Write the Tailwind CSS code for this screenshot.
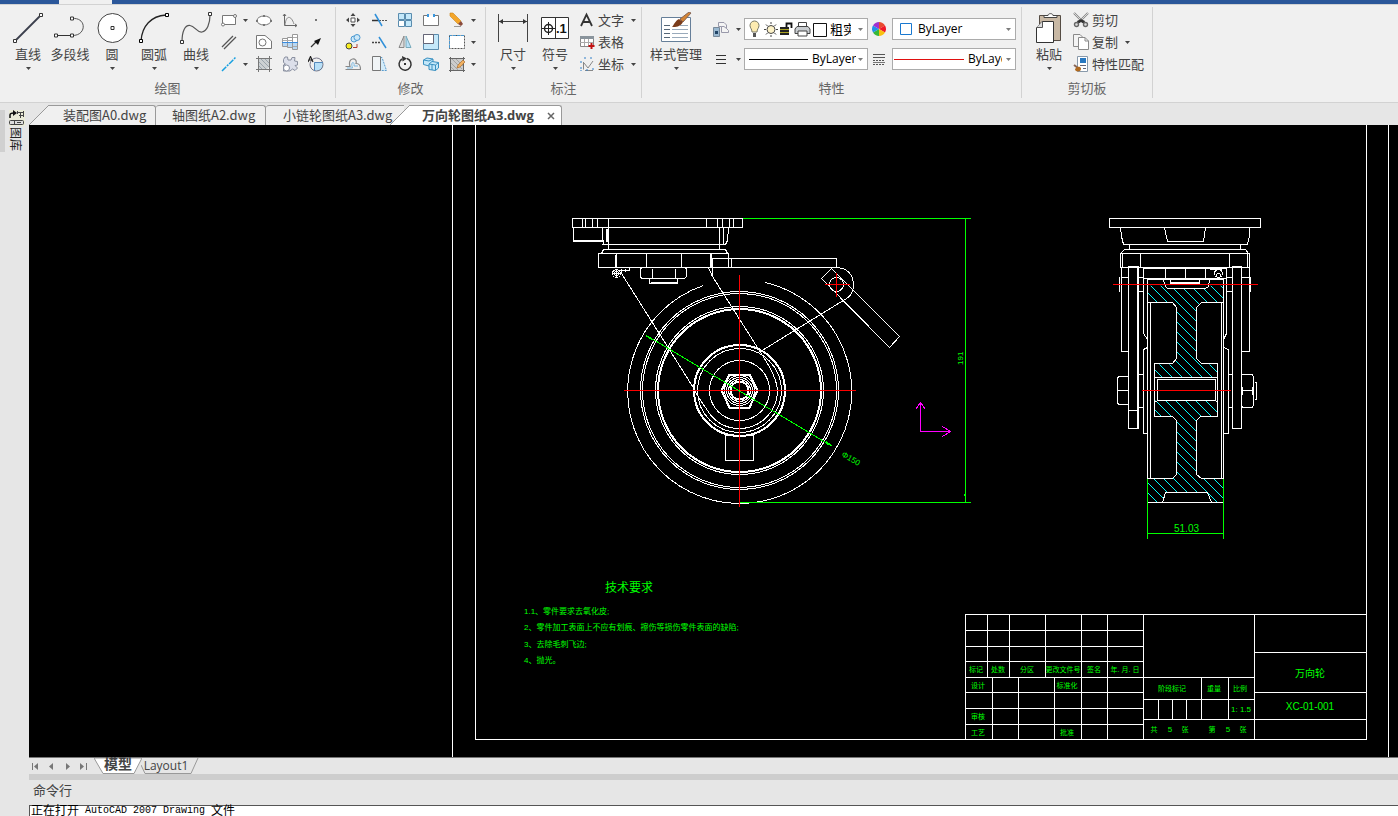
<!DOCTYPE html>
<html lang="zh-CN">
<head>
    <meta charset="UTF-8">
    <meta name="viewport" content="width=device-width, initial-scale=1.0">
    <title>万向轮图纸A3.dwg</title>
    <script src="https://cdn.jsdelivr.net/npm/@tailwindcss/browser@4"></script>
</head>
<body class="bg-[#e6e6e6] text-[#444] text-[13px] leading-[18px] font-['Open_Sans','Noto_Sans_CJK_SC',sans-serif]">
    <!-- Shared shapes -->
    <svg class="hidden">
        <symbol id="caret" viewBox="0 0 5 3"><path d="M0 0H5L2.5 3Z" fill="#444"/></symbol>
        <symbol id="page" viewBox="0 0 16 16"><path d="M.5.5H7L10 3.5V12.5H.5Z" fill="#f4f4f4" stroke="#8a8a8a"/><path d="M5.500 3.500H12L15.500 7V15.500H5.500Z" fill="#fff" stroke="#8a8a8a"/><path d="M12 3.500V7H15.500" fill="none" stroke="#8a8a8a"/></symbol>
    </svg>

    <div class="h-screen flex flex-col overflow-hidden">
        <!-- Title strip -->
        <div class="h-1 shrink-0 flex bg-[#2b579a]">
            <div class="ml-[59px] w-[53px] bg-[#f0f0f0]"></div>
        </div>

        <!-- Ribbon -->
        <header class="h-[99px] shrink-0 flex bg-[#f0f0f0] border-y border-[#d2d2d2] whitespace-nowrap">
            <!-- Draw -->
            <section class="w-[336px] mt-[2px] mb-1 border-r border-[#d2d2d2] pt-[2px] flex flex-col">
                <div class="h-[66px] flex pl-[7px]">
                    <button class="w-[42px] pt-[3px] flex flex-col items-center">
                        <svg class="size-8" viewBox="0 0 32 32"><path d="M3 29L29 3" stroke="#3b3f4c" stroke-width="1.800"/><path d="M1.500 27.500h3v3h-3zM27.500 1.500h3v3h-3z" fill="#fff" stroke="#333"/></svg>
                        <span class="mt-px">直线</span>
                        <svg class="mt-1 w-[5px] h-[3px]"><use href="#caret"/></svg>
                    </button>
                    <button class="w-[42px] pt-[3px] flex flex-col items-center">
                        <svg class="size-8" viewBox="0 0 32 32"><path d="M2 23.500H18" stroke="#333"/><path d="M18 6.500C33 5 33 24 18 23.500" fill="none" stroke="#555"/><path d="M.5 22h3v3h-3zM16.500 22h3v3h-3zM16.500 5h3v3h-3z" fill="#fff" stroke="#333"/></svg>
                        <span class="mt-px">多段线</span>
                    </button>
                    <button class="w-[42px] pt-[3px] flex flex-col items-center">
                        <svg class="size-8" viewBox="0 0 32 32"><circle cx="16.500" cy="16" r="14.500" fill="#fff" stroke="#444"/><path d="M15 14.500h3v3h-3z" fill="#fff" stroke="#333"/></svg>
                        <span class="mt-px">圆</span>
                        <svg class="mt-1 w-[5px] h-[3px]"><use href="#caret"/></svg>
                    </button>
                    <button class="w-[42px] pt-[3px] flex flex-col items-center">
                        <svg class="size-8" viewBox="0 0 32 32"><path d="M3 29C4 14 13 4 28 3" fill="none" stroke="#222" stroke-width="1.300"/><path d="M1.500 27.500h3v3h-3zM27.500 1.500h3v3h-3z" fill="#fff" stroke="#000"/></svg>
                        <span class="mt-px">圆弧</span>
                        <svg class="mt-1 w-[5px] h-[3px]"><use href="#caret"/></svg>
                    </button>
                    <button class="w-[42px] pt-[3px] flex flex-col items-center">
                        <svg class="size-8" viewBox="0 0 32 32"><path d="M2 30C2 19 5 13 10 13.500C15 14 17 21 22 20C27 19 30 12 30 3" fill="none" stroke="#555" stroke-width="1.200"/><path d="M.5 28.500h3v3h-3zM28.500.5h3v3h-3z" fill="#fff" stroke="#333"/></svg>
                        <span class="mt-px">曲线</span>
                        <svg class="mt-1 w-[5px] h-[3px]"><use href="#caret"/></svg>
                    </button>
                    <div class="grid grid-cols-[34px_26px_26px_26px] grid-rows-3">
                        <button aria-label="矩形" class="flex items-center gap-[6px] pl-1"><svg class="size-4" viewBox="0 0 16 16"><path d="M1.500 3.500h13v9h-13z" fill="#fff" stroke="#777"/><circle cx="14" cy="4" r="1.500" fill="#fff" stroke="#777"/><circle cx="2" cy="12.500" r="1.500" fill="#fff" stroke="#777"/></svg><svg class="w-[5px] h-[3px]"><use href="#caret"/></svg></button>
                        <button aria-label="椭圆" class="flex items-center justify-center"><svg class="size-4" viewBox="0 0 16 16"><ellipse cx="8" cy="8.500" rx="7" ry="4.500" fill="#fff" stroke="#777"/><path d="M0 8h2v2H0zM14 8h2v2h-2zM7 3h2v2H7zM7 12h2v2H7z" fill="#777"/></svg></button>
                        <button aria-label="样条曲线" class="flex items-center justify-center"><svg class="size-4" viewBox="0 0 16 16"><path d="M2.500 2V13.500H15M1 4L2.500 2L4 4M13 12L15 13.500L13 15" fill="none" stroke="#666"/><path d="M3 13C4 3 9 3 12 12" fill="none" stroke="#888"/></svg></button>
                        <button aria-label="点" class="flex items-center justify-center"><svg class="size-4" viewBox="0 0 16 16"><path d="M7 7h2v2H7z" fill="#777"/></svg></button>
                        <button aria-label="平行线" class="flex items-center pl-1"><svg class="size-4" viewBox="0 0 16 16"><path d="M1 13L12 2M3 15L15 3" stroke="#555" stroke-width="1.300"/></svg></button>
                        <button aria-label="面域" class="flex items-center justify-center"><svg class="size-4" viewBox="0 0 16 16"><path d="M.5 1.500H9L15.500 7V14.500H.5Z" fill="#fff" stroke="#777"/><circle cx="6.500" cy="8.500" r="3.500" fill="#fff" stroke="#777"/></svg></button>
                        <button aria-label="轴" class="flex items-center justify-center"><svg class="size-4" viewBox="0 0 16 16"><path d="M.5 4.500h5v8h-5zM5.500 3.500h5v10h-5zM10.500.5h5v15h-5z" fill="#fff" stroke="#999"/><path d="M1 8h4v4H1zM6 8h4v5H6zM11 8h4v7h-4z" fill="#b8d8f4"/><path d="M0 8.500H16" stroke="#3c8cdc"/><path d="M1 6.500H10M11 3.500h4M11 12.500h4" stroke="#aaa"/></svg></button>
                        <button aria-label="引线" class="flex items-center justify-center"><svg class="size-4" viewBox="0 0 16 16"><path d="M3 13L9 7" stroke="#333" stroke-width="1.200"/><path d="M13 4L6 7L10 11Z" fill="#111"/></svg></button>
                        <button aria-label="构造线" class="flex items-center gap-[6px] pl-1"><svg class="size-4" viewBox="0 0 16 16"><path d="M1 15L15 1" stroke="#18a0e0" stroke-width="1.500" stroke-dasharray="6 1 2 1"/></svg><svg class="w-[5px] h-[3px]"><use href="#caret"/></svg></button>
                        <button aria-label="图案填充" class="flex items-center justify-center"><svg class="size-4" viewBox="0 0 16 16"><path d="M2 2H14V10L10 14H2Z" fill="#ccd0d2"/><path d="M2 5L11 14M2 9L7 14M4 2L14 12M8 2L14 8" stroke="#9aa4ac"/><path d="M2.500 0V16M13.500 0V16M0 2.500H16M0 13.500H16" stroke="#777"/></svg></button>
                        <button aria-label="齿轮" class="flex items-center justify-center"><svg class="size-4" viewBox="0 0 16 16"><path d="M1.500 3.500L3 1H5.500L6 4H9L10 1.500H13L12.500 5L15.500 5.500V9L13 9.500L15.500 12L13 14.500L10.500 13L8 15H1.500V9L3.500 8L1.500 6.500Z" fill="#dcdfea" stroke="#8a90a0"/><circle cx="4.500" cy="12" r="3" fill="#fff" stroke="#8a90a0"/></svg></button>
                        <button aria-label="局部放大" class="flex items-center justify-center"><svg class="size-4" viewBox="0 0 16 16"><path d="M6 6h9v4a5 5 0 0 1-9 3z" fill="#b8e0f8"/><circle cx="8.500" cy="8.500" r="6.500" fill="none" stroke="#778"/><path d="M6.500 15V6.500H15" fill="none" stroke="#58b"/><path d="M0 6L2.500.5 5 6M1 4h3" fill="none" stroke="#222" stroke-width="1.200"/></svg></button>
                    </div>
                </div>
                <h2 class="mt-1 text-center text-[#666]">绘图</h2>
            </section>

            <!-- Modify -->
            <section class="w-[150px] mt-[2px] mb-1 border-r border-[#d2d2d2] pt-[2px] flex flex-col">
                <div class="h-[66px] grid grid-cols-[26px_26px_26px_26px_40px] grid-rows-3 pl-1">
                    <button aria-label="移动" class="flex items-center justify-center"><svg class="size-4" viewBox="0 0 16 16"><path d="M6 6h4v4H6z" fill="#fff" stroke="#555"/><path d="M8 1L10.500 4H5.500ZM8 15L10.500 12H5.500ZM1 8L4 5.500V10.500ZM15 8L12 5.500V10.500Z" fill="#444"/></svg></button>
                    <button aria-label="修剪" class="flex items-center justify-center"><svg class="size-4" viewBox="0 0 16 16"><path d="M1 8.500H8" stroke="#333" stroke-width="1.500"/><path d="M8 8.500H16" stroke="#555" stroke-dasharray="2 1"/><path d="M4 2L11 14" stroke="#2f8fd8" stroke-width="1.500"/></svg></button>
                    <button aria-label="阵列" class="flex items-center justify-center"><svg class="size-4" viewBox="0 0 16 16"><path d="M1.500 1.500h6v6h-6zM8.500 1.500h6v6h-6zM8.500 8.500h6v6h-6z" fill="#c4e8fa" stroke="#5a8cae"/><path d="M1.500 8.500h6v6h-6z" fill="#fff" stroke="#5a8cae"/></svg></button>
                    <button aria-label="打断" class="flex items-center justify-center"><svg class="size-4" viewBox="0 0 16 16"><path d="M5 3.500H.5V13.500H15.500V3.500H11" fill="#fff" stroke="#777"/><path d="M4 2h2v3H4zM10 2h2v3h-2z" fill="#3a98e0"/></svg></button>
                    <button aria-label="删除" class="flex items-center gap-[6px] pl-[5px]"><svg class="size-4" viewBox="0 0 16 16"><path d="M1 1L4 1L12 9L9 12L1 4Z" fill="#f4a62a" stroke="#c98418" stroke-width=".6"/><path d="M9 12L12 9L14 12L12 14Z" fill="#8a4a3a"/><path d="M5 14.500H12" stroke="#999"/></svg><svg class="w-[5px] h-[3px]"><use href="#caret"/></svg></button>
                    <button aria-label="复制对象" class="flex items-center justify-center"><svg class="size-4" viewBox="0 0 16 16"><circle cx="9" cy="5" r="3" fill="#cde8f8" stroke="#4a98d0"/><circle cx="12" cy="3.500" r="3" fill="#cde8f8" stroke="#4a98d0"/><circle cx="4" cy="12" r="3" fill="#f8ee20" stroke="#444"/><path d="M8 13.500H12V10" fill="none" stroke="#b04030"/></svg></button>
                    <button aria-label="延伸" class="flex items-center justify-center"><svg class="size-4" viewBox="0 0 16 16"><path d="M1 8.500H9" stroke="#444" stroke-width="1.500" stroke-dasharray="2 1"/><path d="M8 3L15 14" stroke="#2f8fd8" stroke-width="1.500"/></svg></button>
                    <button aria-label="镜像" class="flex items-center justify-center"><svg class="size-4" viewBox="0 0 16 16"><path d="M7 2V13.500H2Z" fill="#ddd" stroke="#888"/><path d="M9 2V13.500H14Z" fill="#b8e0f8" stroke="#7ab"/></svg></button>
                    <button aria-label="缩放" class="flex items-center justify-center"><svg class="size-4" viewBox="0 0 16 16"><path d="M.5.5h15v15H.5z" fill="#c4e8fa" stroke="#5a8cae"/><path d="M.5.500h10v9H.5z" fill="#fff" stroke="#667"/></svg></button>
                    <button aria-label="边界" class="flex items-center gap-[6px] pl-[5px]"><svg class="size-4" viewBox="0 0 16 16"><path d="M.5 1.500h15v13H.5z" fill="#fff" stroke="#555" stroke-dasharray="2 1"/><path d="M.5 14V1.500H15" fill="none" stroke="#4a98d0" stroke-dasharray="3 1"/></svg><svg class="w-[5px] h-[3px]"><use href="#caret"/></svg></button>
                    <button aria-label="偏移" class="flex items-center justify-center"><svg class="size-4" viewBox="0 0 16 16"><path d="M.5 10.500H5C2 1 13 1 11 7.500C14.500 7.500 15.500 9 15.500 13.500H.5" fill="none" stroke="#888" stroke-width="1.200"/><path d="M2 12H7.500C5 5 10 5 9 10H13" fill="none" stroke="#7ab8e0"/></svg></button>
                    <button aria-label="拉伸" class="flex items-center justify-center"><svg class="size-4" viewBox="0 0 16 16"><path d="M6.500 1.500H11L15.500 14.500H6.500" fill="#d4ecfa" stroke="#5a9cce" stroke-dasharray="2 1"/><path d="M1.500.5H9.500V14.500H1.500Z" fill="#f0f4f6" stroke="#777"/></svg></button>
                    <button aria-label="旋转" class="flex items-center justify-center"><svg class="size-4" viewBox="0 0 16 16"><path d="M10 2.500A6 6 0 1 1 5 3" fill="none" stroke="#333" stroke-width="1.500"/><path d="M5 0L10 2.500L5.500 5.500Z" fill="#333"/><path d="M7 7h2v2H7z" fill="#333"/></svg></button>
                    <button aria-label="三维复制" class="flex items-center justify-center"><svg class="size-4" viewBox="0 0 16 16"><path d="M.5 4L4 2L10 3V8L6 10L.5 8.500Z" fill="#c4e8fa" stroke="#3a90c0"/><path d="M6 8L9 5.500L15.500 6.500V12L12.500 14.500L6 13.500Z" fill="#c4e8fa" stroke="#3a90c0"/><path d="M6 8L12.500 9L15.500 6.500M12.500 9V14.500M.5 4L6 5L10 3M9 8.500V14" fill="none" stroke="#3a90c0"/></svg></button>
                    <button aria-label="编辑填充" class="flex items-center gap-[6px] pl-[5px]"><svg class="size-4" viewBox="0 0 16 16"><path d="M1.500 2.500h13v12h-13z" fill="#ccc"/><path d="M2 7L9 14M2 11L5 14M3 3L13 13M7 3L14 10" stroke="#a4a4a4"/><path d="M0 2.500H16M0 14.500H16M1.500 1V16M14.500 1V16" stroke="#666"/><path d="M8 12L9 9L14 4L16 6L11 11Z" fill="#f0b060" stroke="#a06020" stroke-width=".6"/></svg><svg class="w-[5px] h-[3px]"><use href="#caret"/></svg></button>
                </div>
                <h2 class="mt-1 text-center text-[#666]">修改</h2>
            </section>

            <!-- Annotate -->
            <section class="w-[156px] mt-[2px] mb-1 border-r border-[#d2d2d2] pt-[2px] flex flex-col">
                <div class="h-[66px] flex pl-[6px]">
                    <button class="w-[42px] pt-[3px] flex flex-col items-center">
                        <svg class="size-8" viewBox="0 0 32 32"><path d="M1.500 2V30M30.500 2V30M2 9.500H30" stroke="#444"/><path d="M2 9.500L6 7V12ZM30 9.500L26 7V12Z" fill="#333"/></svg>
                        <span class="mt-px">尺寸</span>
                        <svg class="mt-1 w-[5px] h-[3px]"><use href="#caret"/></svg>
                    </button>
                    <button class="w-[42px] pt-[3px] flex flex-col items-center">
                        <svg class="size-8" viewBox="0 0 32 32"><path d="M2.500 5.500h27v21h-27z" fill="#fff" stroke="#333"/><path d="M16.500 5V26" stroke="#333"/><circle cx="9.500" cy="16.500" r="4" fill="none" stroke="#222" stroke-width="1.500"/><path d="M3 16.500H16M9.500 10V23" stroke="#222"/><text x="17" y="21" font-size="13" font-weight="700" font-family="Liberation Sans" fill="#111">.1</text></svg>
                        <span class="mt-px">符号</span>
                        <svg class="mt-1 w-[5px] h-[3px]"><use href="#caret"/></svg>
                    </button>
                    <div class="grid grid-rows-3 pl-[3px]">
                        <button class="flex items-center gap-[3px]"><svg class="size-4" viewBox="0 0 16 16"><path d="M2 14L7.500 2.500L13 14M4 10H11" fill="none" stroke="#333" stroke-width="1.800"/></svg>文字<svg class="ml-1 w-[5px] h-[3px]"><use href="#caret"/></svg></button>
                        <button class="flex items-center gap-[3px]"><svg class="size-4" viewBox="0 0 16 16"><path d="M1.500 2.500h13v10h-13z" fill="#fff" stroke="#888"/><path d="M1 2h14v3H1z" fill="#8a949c"/><path d="M1 8.500H14M5.500 5V12M9.500 5V12" stroke="#aaa"/><path d="M12.500 9v6M9.500 12h6" stroke="#c01010" stroke-width="2"/></svg>表格</button>
                        <button class="flex items-center gap-[3px]"><svg class="size-4" viewBox="0 0 16 16"><path d="M4.500 6V13.500M6 14.500H14M5 7L9 12L14 5" fill="none" stroke="#888"/><path d="M2 5v3M2 11v4M6 1v3M12 1v3M7 14h2M14 12v3" stroke="#2f7fc8" stroke-dasharray="2 1"/></svg>坐标<svg class="ml-1 w-[5px] h-[3px]"><use href="#caret"/></svg></button>
                    </div>
                </div>
                <h2 class="mt-1 text-center text-[#666]">标注</h2>
            </section>

            <!-- Properties -->
            <section class="w-[380px] mt-[2px] mb-1 border-r border-[#d2d2d2] pt-[2px] flex flex-col">
                <div class="h-[66px] flex pl-[6px]">
                    <button class="w-14 pt-[3px] flex flex-col items-center">
                        <svg class="size-8" viewBox="0 0 32 32"><path d="M1.500 5.500h29v24h-29z" fill="#fff" stroke="#667f99"/><path d="M4 13.500h6M4 17.500h6M4 21.500h6M4 25.500h6" stroke="#567" /><path d="M12 17.500h16M12 21.500h16M12 25.500h16M20 13.500h8" stroke="#9ab"/><path d="M20 7L29 0L31 1L23 10Z" fill="#d48434" stroke="#865"/><path d="M12 15C14 13 15 9 19 7L23 10C20 15 16 15 12 15Z" fill="#7a3c1c"/></svg>
                        <span class="mt-px">样式管理</span>
                        <svg class="mt-1 w-[5px] h-[3px]"><use href="#caret"/></svg>
                    </button>
                    <div class="grid grid-cols-[32px_124px_24px_124px] grid-rows-[22px_22px] gap-y-2 pt-[9px] pl-2">
                        <button aria-label="图层" class="flex items-center gap-[7px] pl-px"><svg class="size-4" viewBox="0 0 16 16"><path d="M5.500 1.500H11L13.500 4V7.500L15.500 9.500V11.500H8.500V5.500H5.500Z" fill="#f4f4f4" stroke="#99a"/><path d="M8.500 5.500H11L13.500 7.500" fill="none" stroke="#99a"/><path d="M.5 6.500h6v9h-6z" fill="#9ab8d0" stroke="#789"/><path d="M2 10h3v3H2z" fill="#246"/></svg><svg class="w-[5px] h-[3px]"><use href="#caret"/></svg></button>
                        <label class="flex items-center bg-white border border-[#ababab] pl-[3px] pr-1">
                            <svg class="w-[80px] h-5 shrink-0" viewBox="0 0 80 20"><path d="M4 13C4 10 2 9 2 6.500A4.500 4.500 0 0 1 11 6.500C11 9 9 10 9 13Z" fill="#fdebb0" stroke="#776"/><path d="M5 14h3v4H5z" fill="#555"/><circle cx="23" cy="10.500" r="4" fill="#fdf2c8" stroke="#444"/><path d="M23 3v2M23 16v2M16 10.500h2M28 10.500h2M18 5.500l1.500 1.500M28 5.500l-1.500 1.500M18 15.500l1.500-1.500M28 15.500l-1.500-1.500" stroke="#444"/><path d="M32 8h9v8h-9z" fill="#222"/><path d="M32 10.500h9M32 13.500h9" stroke="#a8a020"/><path d="M38.500 8V4.500H43.500V9" fill="none" stroke="#111" stroke-width="1.800"/><path d="M50.500 3.500h8v5h-8z" fill="#fff" stroke="#444"/><path d="M49 7.500H60L62 10V14.500H47V10Z" fill="#c8ccd0" stroke="#444"/><path d="M50 12h9v5h-9z" fill="#fff" stroke="#444"/><path d="M65.500 4.500h13v13h-13z" fill="#fff" stroke="#111"/></svg>
                            <select aria-label="图层列表" class="appearance-none w-[21px] ml-[2px] text-black overflow-hidden [text-overflow:clip]"><option>粗实线层</option></select>
                            <svg class="ml-auto w-[5px] h-[3px] opacity-70"><use href="#caret"/></svg>
                        </label>
                        <div class="flex items-center pl-1"><svg class="size-[14px]" viewBox="0 0 14 14"><path d="M7 7V0A7 7 0 0 1 13 3.500Z" fill="#e84a30"/><path d="M7 7L13 3.500A7 7 0 0 1 13 10.500Z" fill="#f01828"/><path d="M7 7L13 10.500A7 7 0 0 1 7 14Z" fill="#f8c010"/><path d="M7 7V14A7 7 0 0 1 1 10.500Z" fill="#38b838"/><path d="M7 7L1 10.500A7 7 0 0 1 1 3.500Z" fill="#2090e8"/><path d="M7 7L1 3.500A7 7 0 0 1 7 0Z" fill="#a030d0"/></svg></div>
                        <label class="flex items-center bg-white border border-[#ababab] pl-[7px] pr-1">
                            <svg class="size-3 shrink-0"><path d="M.5.5h11v11H.5z" fill="#fff" stroke="#1878d0"/></svg>
                            <select aria-label="颜色" class="appearance-none ml-[6px] text-xs text-black w-[48px]"><option>ByLayer</option></select>
                            <svg class="ml-auto w-[5px] h-[3px] opacity-70"><use href="#caret"/></svg>
                        </label>
                        <button aria-label="线型管理" class="flex items-center gap-2 pl-1"><svg class="w-[10px] h-[9px]"><path d="M0 .5H10M0 4.500H10M0 8.500H10" stroke="#333"/></svg><svg class="ml-[2px] w-[5px] h-[3px]"><use href="#caret"/></svg></button>
                        <label class="flex items-center bg-white border border-[#ababab] pl-1 pr-1">
                            <svg class="w-[59px] h-px shrink-0"><path d="M0 .5H59" stroke="#000"/></svg>
                            <select aria-label="线型" class="appearance-none ml-1 text-xs text-black w-[44px]"><option>ByLayer</option></select>
                            <svg class="ml-auto w-[5px] h-[3px] opacity-70"><use href="#caret"/></svg>
                        </label>
                        <div class="flex items-center pl-[5px]"><svg class="w-3 h-[11px]"><path d="M0 .5H12M0 3.500H12" stroke="#555"/><path d="M0 6.500H12M0 10.500H12" stroke="#555" stroke-dasharray="2 1"/><path d="M0 8.500H12" stroke="#777"/></svg></div>
                        <label class="flex items-center bg-white border border-[#ababab] pl-px pr-1">
                            <svg class="w-[70px] h-px shrink-0"><path d="M0 .5H70" stroke="#e01010"/></svg>
                            <select aria-label="线宽" class="appearance-none ml-1 text-xs text-black w-[34px] overflow-hidden [text-overflow:clip]"><option>ByLayer</option></select>
                            <svg class="ml-auto w-[5px] h-[3px] opacity-70"><use href="#caret"/></svg>
                        </label>
                    </div>
                </div>
                <h2 class="mt-1 text-center text-[#666]">特性</h2>
            </section>

            <!-- Clipboard -->
            <section class="w-[131px] mt-[2px] mb-1 border-r border-[#d2d2d2] pt-[2px] flex flex-col">
                <div class="h-[66px] flex pl-[6px]">
                    <button class="w-[42px] pt-[3px] flex flex-col items-center">
                        <svg class="size-8" viewBox="0 0 32 32"><path d="M6.500 3.500h21v25h-21z" fill="#c8b8a4" stroke="#554c44"/><path d="M11 5.500V3.500H15C15 1 20 1 20 3.500H24V5.500Z" fill="#fff" stroke="#444"/><path d="M3.500 16L9 9.500H20.500V30.500H3.500Z" fill="#fff" stroke="#333"/><path d="M3.500 15.500H9.500V9.500" fill="#ddd" stroke="#555"/></svg>
                        <span class="mt-px">粘贴</span>
                        <svg class="mt-1 w-[5px] h-[3px]"><use href="#caret"/></svg>
                    </button>
                    <div class="grid grid-rows-3 pl-[3px]">
                        <button class="flex items-center gap-[3px]"><svg class="size-4" viewBox="0 0 16 16"><path d="M1 1L10 10M15 1L6 10" stroke="#888" stroke-width="2.200"/><path d="M1 1L10 10M15 1L6 10" stroke="#eee" stroke-width=".8"/><path d="M4 9l4-2 4 2-1 3-3-2-3 2z" fill="#333"/><circle cx="3.500" cy="12.500" r="2" fill="#ddd" stroke="#666" stroke-width="1.400"/><circle cx="12.500" cy="12.500" r="2" fill="#ddd" stroke="#666" stroke-width="1.400"/></svg>剪切</button>
                        <button class="flex items-center gap-[3px]"><svg class="size-4"><use href="#page"/></svg>复制<svg class="ml-1 w-[5px] h-[3px]"><use href="#caret"/></svg></button>
                        <button class="flex items-center gap-[3px]"><svg class="size-4" viewBox="0 0 16 16"><path d="M4.500.5h10v15h-10z" fill="#fff" stroke="#8899aa"/><path d="M7 2h6v5H7z" fill="#2878c0"/><path d="M7 9.500h6M10 12.500h3" stroke="#667"/><path d="M1 9L5 12" stroke="#865" stroke-width="2"/><path d="M4 11C8 10 9 13 7 15C4 16 2 15 2 13Z" fill="#b06a20"/></svg>特性匹配</button>
                    </div>
                </div>
                <h2 class="mt-1 text-center text-[#666]">剪切板</h2>
            </section>
        </header>

        <div class="flex-1 min-h-0 flex">
            <!-- Docked palette handle -->
            <aside class="w-[29px] shrink-0 flex items-start pt-[7px]">
                <div class="w-[5px] h-[42px] bg-[#d0d0d0]"></div>
                <button class="ml-1 flex flex-col items-start">
                    <svg class="size-4" viewBox="0 0 16 16"><path d="M0 0h16v16H0z" fill="#ebecd8"/><path d="M1 8V5C1 3 3 3 5 3" fill="none" stroke="#111" stroke-width="1.500"/><path d="M4 0L8 3L4 6Z" fill="#111"/><path d="M8 2.500H15M10 5.500h5M11.500 3V8M8.500 1v3M14.500 1v6" fill="none" stroke="#444"/><rect x=".5" y="10.500" width="14" height="4" rx="1" fill="#ddd" stroke="#444"/><path d="M5.500 10v5M8 12.500h4" stroke="#444"/></svg>
                    <span class="mt-px text-xs leading-3 text-[#222] [writing-mode:vertical-rl] [text-orientation:sideways]">图库</span>
                </button>
            </aside>

            <div class="flex-1 min-w-0 flex flex-col">
                <!-- Document tabs -->
                <nav class="h-[22px] shrink-0 flex pt-[2px] whitespace-nowrap leading-[18px]">
                    <button class="flex font-['Noto_Sans_CJK_SC',sans-serif]">
                        <svg class="w-5 h-5"><path d="M0 20L20 0V20Z" fill="#f0f0f0"/><path d="M0 20L20 0" stroke="#999"/></svg>
                        <span class="w-[107px] h-5 pl-[14px] text-left bg-[#f0f0f0] border-t border-r border-[#999] rounded-tr-[3px]">装配图A0.dwg</span>
                    </button>
                    <button class="w-[110px] pl-4 pb-[2px] text-left bg-[#f0f0f0] border-t border-r border-[#999] rounded-t-[3px] font-['Noto_Sans_CJK_SC',sans-serif]">轴图纸A2.dwg</button>
                    <button class="w-[138px] pl-[17px] pb-[2px] text-left bg-[#f0f0f0] border-t border-[#999] rounded-tl-[3px] font-['Noto_Sans_CJK_SC',sans-serif]">小链轮图纸A3.dwg</button>
                    <div class="-ml-[14px] flex">
                        <svg class="w-5 h-5"><path d="M0 20L20 0V20Z" fill="#fff"/><path d="M0 20L20 0" stroke="#999"/></svg>
                        <div class="w-[152px] h-5 pl-3 pr-[6px] flex bg-white border-t border-r border-[#999] rounded-tr-[3px]">
                            <button class="pb-px font-bold">万向轮图纸A3.dwg</button>
                            <button aria-label="关闭" class="ml-auto"><svg class="size-2"><path d="M1 1L7 7M7 1L1 7" stroke="#666" stroke-width="1.500"/></svg></button>
                        </div>
                    </div>
                </nav>

                <!-- Model space -->
                <main class="flex-1 min-h-0 bg-black">
                    <svg class="block w-full h-full" viewBox="29 125 1369 632" preserveAspectRatio="xMinYMin slice">
                        <defs>
                            <clipPath id="wheel-section">
                                <path d="M1147 285H1163L1167 288H1205L1209 285H1223V302H1201L1196 306V358L1201 364H1217V377H1154V364H1172L1176 358V306L1172 302H1147Z"/>
                                <path d="M1154 400H1217V416H1200L1196 420V474L1201 478H1223V502H1211L1207 492H1165L1162 502H1147V478H1172L1176 474V420L1172 416H1154Z"/>
                            </clipPath>
                        </defs>
                        <g transform="translate(.5 .5)" fill="none" stroke="#fff" shape-rendering="crispEdges">
                            <!-- sheet border -->
                            <path d="M452 120V760M1388 120V760M475 120V739H1366V120"/>

                            <!-- title block -->
                            <path d="M965 739V614H1366M965 630H1143M965 646H1143M965 661H1143M965 677H1254M965 692H1143M965 708H1143M965 724H1143"/>
                            <path d="M987 614V677M1009 614V677M1045 614V677M1081 614V739M1107 614V739M1143 614V739M992 677V739M1018 677V739M1054 677V739"/>
                            <path d="M1254 614V739M1254 652H1366M1254 692H1366M1143 699H1254M1143 719H1366M1201 677V719M1228 677V719M1158 699V719M1172 699V719M1186 699V719"/>

                            <!-- front view: mounting plate and swivel -->
                            <path d="M572 218H742V227H572ZM582 218V227M585 218V227M592 218V227M597 218V227M608 218V249M706 218V227M717 218V227M722 218V227M729 218V227M733 218V227"/>
                            <path d="M573 227V241H603M573 240H603M602 227V235L603 244M606 228V241M607 228V241M601 244H725M603 249H725M719 227V249M723 227V243M728 227L727 240L725 244M603 249L601 253M725 249L727 253"/>
                            <path d="M598 253H728V267H598ZM615 254V267M616 253V267M646 253V267M681 253V267M710 253V267M711 253V267"/>
                            <path d="M712 276V258H836V267H712M731 258V267"/>
                            <path d="M641 267L640 269V277L642 278H684L686 276V269L685 267M652 268V278M675 268V278M649 278V283H677V278M650 282H677"/>
                            <circle cx="616" cy="273" r="4"/><circle cx="616" cy="273" r="2"/><path d="M612 273H620M616 269V277M617 270H629V267M621 268V272M625 268V271"/>
                            <path d="M621 273L694 389M708 267L712 276L762 355"/>
                            <path d="M760 351L846 298Q853 294 853 284Q852 268 836 267"/>
                            <path d="M831 268L821 278L889 347L899 336Z"/><circle cx="836" cy="284" r="7"/>

                            <!-- front view: wheel -->
                            <path d="M703 285A112 112 0 1 0 765 282"/>
                            <circle cx="739" cy="390" r="99"/><circle cx="739" cy="390" r="97"/>
                            <circle cx="739" cy="390" r="84"/><circle cx="739" cy="390" r="82"/><circle cx="739" cy="390" r="81"/>
                            <circle cx="739" cy="390" r="46"/><circle cx="739" cy="390" r="45"/><circle cx="739" cy="390" r="42"/>
                            <circle cx="739" cy="390" r="30"/>
                            <path d="M694 389C697 397 704 405 709 413Q720 428 739 428A38 38 0 0 0 777 390Q776 376 762 355"/>
                            <path d="M725 435H753V460H725Z"/>
                            <path stroke-width="2" d="M729 374H749L757 390L749 407H729L721 390Z"/>
                            <circle cx="739" cy="390" r="15"/><circle cx="739" cy="390" r="13"/><circle cx="739" cy="390" r="11"/><circle cx="739" cy="390" r="9" stroke-width="2"/>

                            <!-- side view: plate and swivel -->
                            <path d="M1109 218H1260V227H1109ZM1120 227L1121 236L1123 244H1247L1249 236V227M1164 227L1167 241H1203L1205 227M1129 244V249M1240 244V249M1120 253L1124 249H1245L1248 253"/>
                            <path d="M1120 253H1249V267H1120ZM1122 253V267M1247 253V267M1140 253V267M1229 253V267"/>
                            <path d="M1143 268H1226M1143 278H1226M1165 268V278M1185 268V278M1205 268V278M1170 278V283H1199V278M1170 282H1199"/>
                            <circle cx="1218" cy="273" r="4"/><circle cx="1218" cy="275" r="2"/><path d="M1209 269H1221M1214 270V273"/>

                            <!-- side view: fork -->
                            <path d="M1128 266H1138V428H1128ZM1137 266V428M1128 410H1137M1232 266H1241V428H1232Z"/>
                            <path d="M1121 267V351H1128M1119 276V291M1121 277H1128M1249 267V351H1241M1250 276V291M1249 277H1241M1138 277H1143M1138 291H1143M1226 277H1232M1226 291H1232"/>
                            <path d="M1143 267V333L1147 339M1226 267V333L1223 339M1147 347L1143 349V433H1147M1223 347L1228 349V433H1223"/>
                            <path d="M1138 374H1143V407H1138ZM1228 374H1232V407H1228ZM1128 376H1118L1117 378V402L1118 404H1128M1117 390H1128M1241 374H1252L1253 377V404L1252 407H1242L1241 404M1241 390H1253M1242 386V394M1252 386V394M1254 382H1256V399H1254"/>

                            <!-- side view: wheel section -->
                            <g clip-path="url(#wheel-section)" stroke="#0ff">
                                <path d="M925 280l225 225M935 280l225 225M945 280l225 225M955 280l225 225M965 280l225 225M975 280l225 225M985 280l225 225M995 280l225 225M1005 280l225 225M1015 280l225 225"/>
                                <path d="M1025 280l225 225M1035 280l225 225M1045 280l225 225M1055 280l225 225M1065 280l225 225M1075 280l225 225M1085 280l225 225M1095 280l225 225M1105 280l225 225M1115 280l225 225"/>
                                <path d="M1125 280l225 225M1135 280l225 225M1145 280l225 225M1155 280l225 225M1165 280l225 225M1175 280l225 225M1185 280l225 225M1195 280l225 225M1205 280l225 225M1215 280l225 225"/>
                            </g>
                            <path d="M1147 279H1223V502H1147ZM1150 302V478M1221 302V478"/>
                            <path d="M1163 280L1165 286L1167 288H1205L1208 286L1209 280"/>
                            <path d="M1147 302H1172L1176 307V358L1172 363H1154V416H1172L1176 420V474L1172 478H1147M1223 302H1201L1196 307V358L1201 363H1217V416H1200L1196 420V474L1201 478H1223"/>
                            <path d="M1154 377H1217M1157 379H1215V400H1157ZM1154 402L1157 400M1217 402L1215 400M1162 502L1165 492H1207L1211 502"/>

                            <!-- center lines -->
                            <path stroke="#f00" d="M739 274V506M623 390H855M824 284H849M836 272V296M1112 284H1257M1141 390H1230"/>

                            <!-- dimensions -->
                            <g stroke="#0f0">
                                <path d="M742 218H970M965 218V502M739 502H970M964 493V495M1147 478V538M1223 478V538M1147 533H1223"/>
                                <path d="M646 335L832 446M646 335L652 340M832 446L826 441M646 336L651 337M832 445L827 444"/>
                            </g>

                            <!-- UCS marker -->
                            <path stroke="#f0f" d="M920 402V431H950M915 409L920 402L925 409M942 426L950 431L942 436"/>
                        </g>

                        <g class="fill-[#0f0] font-['Liberation_Sans','Noto_Sans_CJK_SC',sans-serif]" font-size="8">
                            <text transform="translate(963 365) rotate(-90)">191</text>
                            <text transform="translate(841 456) rotate(30)">Φ150</text>
                            <text x="1174" y="532" font-size="10">51.03</text>

                            <text x="605" y="592" font-size="12">技术要求</text>
                            <text x="524" y="614">1.1、零件要求去氧化皮;</text>
                            <text x="524" y="630">2、零件加工表面上不应有划痕、擦伤等损伤零件表面的缺陷;</text>
                            <text x="524" y="647">3、去除毛刺飞边;</text>
                            <text x="524" y="663">4、抛光。</text>

                            <text x="1310" y="677" font-size="10" text-anchor="middle">万向轮</text>
                            <text x="1310" y="710" font-size="10" text-anchor="middle">XC-01-001</text>

                            <g font-size="7" text-anchor="middle">
                                <text x="976" y="672">标记</text>
                                <text x="998" y="672">处数</text>
                                <text x="1027" y="672">分区</text>
                                <text x="1063" y="672">更改文件号</text>
                                <text x="1094" y="672">签名</text>
                                <text x="1125" y="672">年. 月. 日</text>
                                <text x="978" y="688">设计</text>
                                <text x="1067" y="688">标准化</text>
                                <text x="978" y="719">审核</text>
                                <text x="978" y="735">工艺</text>
                                <text x="1067" y="735">批准</text>
                                <text x="1172" y="691">阶段标记</text>
                                <text x="1214" y="691">重量</text>
                                <text x="1240" y="691">比例</text>
                                <text x="1241" y="712" font-size="8">1: 1.5</text>
                                <text x="1154" y="732">共</text><text x="1170" y="732" font-size="8">5</text><text x="1185" y="732">张</text>
                                <text x="1212" y="732">第</text><text x="1228" y="732" font-size="8">5</text><text x="1243" y="732">张</text>
                            </g>
                        </g>
                    </svg>
                </main>

                <!-- Layout tabs -->
                <nav class="h-[17px] shrink-0 flex border-t border-[#777] leading-4">
                    <button aria-label="第一个" class="w-[17px] pl-[3px]"><svg class="block w-[7px] h-[7px]"><path d="M.5 0V7" stroke="#777"/><path d="M6 0V7L2 3.500Z" fill="#777"/></svg></button>
                    <button aria-label="上一个" class="w-[17px] pl-[3px]"><svg class="block w-[7px] h-[7px]"><path d="M4 0V7L0 3.500Z" fill="#777"/></svg></button>
                    <button aria-label="下一个" class="w-[17px] pl-[3px]"><svg class="block w-[7px] h-[7px]"><path d="M0 0V7L4 3.500Z" fill="#777"/></svg></button>
                    <button aria-label="最后一个" class="w-[14px]"><svg class="block w-[7px] h-[7px]"><path d="M0 0V7L4 3.500Z" fill="#777"/><path d="M6.500 0V7" stroke="#777"/></svg></button>
                    <button class="relative w-12 h-4 flex justify-center items-start font-bold text-sm leading-3">
                        <svg class="absolute inset-0 w-12 h-4"><path d="M0 0L9 15.500H40L48 0Z" fill="#fff" stroke="#999"/></svg>
                        <span class="relative">模型</span>
                    </button>
                    <button class="relative w-[58px] h-4 -ml-px pr-2 leading-[15px]">
                        <svg class="absolute inset-0 w-[58px] h-4"><path d="M0 7L4 15.500H50L57 0" fill="none" stroke="#999"/></svg>
                        <span class="relative text-xs">Layout1</span>
                    </button>
                </nav>

                <!-- Command line -->
                <div class="h-[6px] shrink-0 bg-[#cdcdcd]"></div>
                <section class="h-9 shrink-0 flex flex-col">
                    <h2 class="h-[25px] shrink-0 pl-1 pt-px">命令行</h2>
                    <div role="log" class="h-[11px] shrink-0 pl-px flex items-center gap-[6px] bg-white border-t border-l border-[#555] text-black text-xs leading-[10px] whitespace-pre">正在打开<span class="text-[10px] font-['Liberation_Mono',monospace]">AutoCAD 2007 Drawing</span>文件</div>
                </section>
            </div>
        </div>
    </div>
</body>
</html>
